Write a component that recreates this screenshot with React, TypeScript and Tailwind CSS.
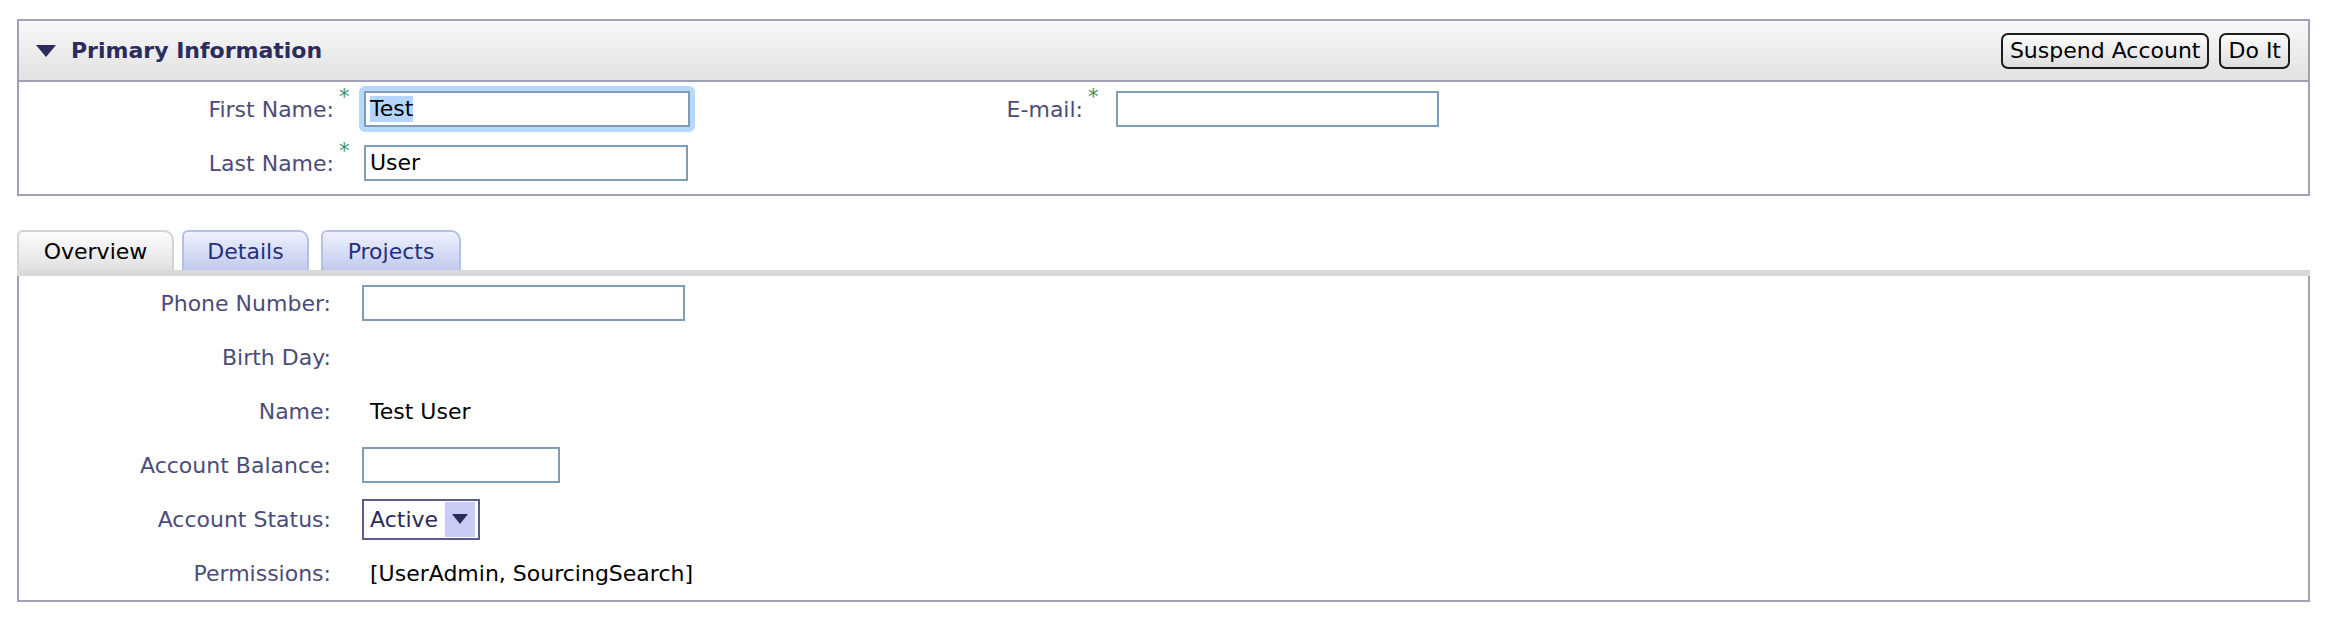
const FONT = "font-['DejaVu_Sans',Verdana,sans-serif]";

const Star = () => (
  <span className="relative -top-[10px] ml-[5px] text-[21px] leading-none text-[#3d8f5f]">*</span>
);

const TextBox = ({
  value,
  width,
  selected,
  focused,
}: {
  value?: string;
  width: string;
  selected?: boolean;
  focused?: boolean;
}) => {
  const box = (
    <div
      className={`${width} flex h-[36px] items-center border-2 border-[#7f9cb8] bg-white pl-[4px] text-[22px] text-black`}
    >
      {value && (
        <span className={selected ? "bg-[#b4d5fe] leading-[26px]" : "leading-[26px]"}>
          {value}
        </span>
      )}
    </div>
  );
  if (!focused) return box;
  return (
    <div className="-m-[5px] rounded-[6px] bg-[#b8d8fa] p-[5px]">{box}</div>
  );
};

const Button = ({ children }: { children: string }) => (
  <button className="h-[36px] rounded-[7px] border-2 border-[#1c1c1c] bg-gradient-to-b from-[#fbfbfb] to-[#dedede] px-[7px] text-[22px] leading-none text-black">
    {children}
  </button>
);

const Label = ({ text, width }: { text: string; width: string }) => (
  <div className={`${width} text-right text-[22px] text-[#4c4c78]`}>{text}</div>
);

const Row = ({ label, children }: { label: string; children?: React.ReactNode }) => (
  <div className="flex h-[54px] items-center">
    <Label text={label} width="w-[312px]" />
    <div className="ml-[31px] flex items-center">{children}</div>
  </div>
);

const Tab = ({
  label,
  active,
  width,
}: {
  label: string;
  active?: boolean;
  width: string;
}) => (
  <div
    className={`${width} flex h-[40px] items-center justify-center rounded-tl-[6px] rounded-tr-[10px] border-2 border-b-0 text-[22px] ${
      active
        ? "border-[#d4d4d4] bg-gradient-to-b from-[#fcfcfc] to-[#e1e1e1] text-black"
        : "border-[#b4c0e6] bg-gradient-to-b from-[#eef1fb] to-[#c2cbef] text-[#24307e]"
    }`}
  >
    {label}
  </div>
);

export default function App() {
  return (
    <div className={`min-h-screen bg-white pl-[17px] pr-[36px] pt-[19px] ${FONT}`}>
      {/* primary information panel */}
      <div className="border-2 border-[#a0a0b8]">
        <div className="flex h-[61px] items-center border-b-2 border-[#a0a0b8] bg-gradient-to-b from-[#f8f8f8] to-[#e2e2e2] pl-[17px] pr-[18px]">
          <svg width="20" height="12" viewBox="0 0 20 12" className="mr-[15px]">
            <polygon points="0,0 20,0 10,12" fill="#2b2b5e" />
          </svg>
          <div className="text-[22px] font-bold text-[#2b2b5e]">Primary Information</div>
          <div className="ml-auto flex gap-[10px]">
            <Button>Suspend Account</Button>
            <Button>Do It</Button>
          </div>
        </div>
        <div className="pb-[4px]">
          <div className="flex h-[54px] items-center">
            <Label text="First Name:" width="w-[315px]" />
            <div className="w-[30px]">
              <Star />
            </div>
            <TextBox value="Test" width="w-[326px]" selected focused />
            <Label text="E-mail:" width="w-[393px]" />
            <div className="w-[33px]">
              <Star />
            </div>
            <TextBox width="w-[323px]" />
          </div>
          <div className="flex h-[54px] items-center">
            <Label text="Last Name:" width="w-[315px]" />
            <div className="w-[30px]">
              <Star />
            </div>
            <TextBox value="User" width="w-[324px]" />
          </div>
        </div>
      </div>

      {/* tabs */}
      <div className="mt-[34px] flex items-end">
        <Tab label="Overview" active width="w-[157px]" />
        <div className="w-[8px]" />
        <Tab label="Details" width="w-[127px]" />
        <div className="w-[12px]" />
        <Tab label="Projects" width="w-[140px]" />
      </div>
      <div className="h-[6px] bg-[#d9d9d9]" />
      <div className="border-x-2 border-b-2 border-[#a0a0b8]">
        <Row label="Phone Number:">
          <TextBox width="w-[323px]" />
        </Row>
        <Row label="Birth Day:" />
        <Row label="Name:">
          <span className="pl-[8px] text-[22px] text-black">Test User</span>
        </Row>
        <Row label="Account Balance:">
          <TextBox width="w-[198px]" />
        </Row>
        <Row label="Account Status:">
          <div className="flex h-[41px] w-[118px] items-center border-2 border-[#5b5b8c] bg-white pl-[6px] pr-[3px]">
            <span className="text-[22px] text-[#2b2b5b]">Active</span>
            <div className="ml-auto flex h-[35px] w-[30px] items-center justify-center bg-[#cbcbf8]">
              <svg width="16" height="10" viewBox="0 0 16 10">
                <polygon points="0,0 16,0 8,10" fill="#2b2b5e" />
              </svg>
            </div>
          </div>
        </Row>
        <Row label="Permissions:">
          <span className="pl-[8px] text-[22px] text-black">[UserAdmin, SourcingSearch]</span>
        </Row>
      </div>
    </div>
  );
}
